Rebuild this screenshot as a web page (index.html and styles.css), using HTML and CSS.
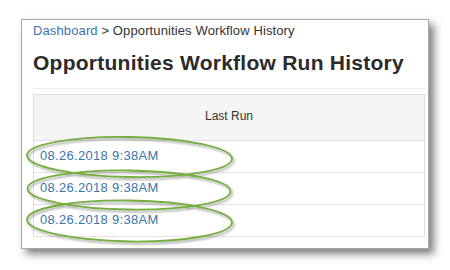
FILE: index.html
```html
<!DOCTYPE html>
<html>
<head>
<meta charset="utf-8">
<link rel="stylesheet" href="styles.css">
</head>
<body>
<div class="card">
  <div class="crumbs"><a class="link" href="#">Dashboard</a> &gt; Opportunities Workflow History</div>
  <h1 class="title">Opportunities Workflow Run History</h1>
  <table class="runs">
    <thead>
      <tr><th>Last Run</th></tr>
    </thead>
    <tbody>
      <tr><td><a class="link" href="#">08.26.2018 9:38AM</a></td></tr>
      <tr><td><a class="link" href="#">08.26.2018 9:38AM</a></td></tr>
      <tr><td><a class="link" href="#">08.26.2018 9:38AM</a></td></tr>
    </tbody>
  </table>
</div>
<svg class="marks" width="450" height="270" viewBox="0 0 450 270">
  <defs>
    <filter id="sh" x="-10%" y="-30%" width="120%" height="160%">
      <feDropShadow dx="1.5" dy="2" stdDeviation="1.2" flood-color="#000" flood-opacity="0.35"/>
    </filter>
  </defs>
  <g fill="none" stroke="#74ad3f" stroke-width="1.8" filter="url(#sh)">
    <ellipse cx="129.5" cy="157" rx="102.5" ry="20" transform="rotate(1 129.5 157)"/>
    <ellipse cx="129" cy="190" rx="101.5" ry="19.5" transform="rotate(0.8 129 190)"/>
    <ellipse cx="129.5" cy="221" rx="102.5" ry="20.5" transform="rotate(0.8 129.5 221)"/>
  </g>
</svg>
</body>
</html>
```
FILE: styles.css
```css
html, body {
  margin: 0;
  padding: 0;
  background: #fff;
}
body {
  width: 450px;
  height: 270px;
  overflow: hidden;
  position: relative;
  font-family: "Liberation Sans", Arial, sans-serif;
  color: #333;
}
.card {
  margin: 19px 0 0 21px;
  width: 393px;
  height: 216px;
  border: 1px solid #a9a9a9;
  padding: 2px 2px 10px 11px;
  background: #fff;
  box-shadow: 5px 5px 8px rgba(0, 0, 0, 0.5);
}
.link {
  color: #3a76ad;
  text-decoration: none;
}
.crumbs {
  font-size: 13px;
  line-height: 18px;
  letter-spacing: 0.12px;
  color: #333;
}
.title {
  margin: 10.5px 0 0 0;
  font-size: 21px;
  line-height: 24px;
  letter-spacing: 0.25px;
  font-weight: bold;
  color: #2b2b2b;
  padding-bottom: 13px;
  border-bottom: 1px solid #f0f0f0;
}
.runs {
  margin-top: 5px;
  width: 392px;
  border-collapse: collapse;
  border: 1px solid #dddddd;
}
.runs th {
  background: #f5f5f5;
  font-size: 12px;
  font-weight: normal;
  line-height: 16px;
  height: 46px;
  padding: 0 0 2px 0;
  box-sizing: border-box;
  text-align: center;
  color: #333;
  border-bottom: 1px solid #e2e2e2;
}
.runs td {
  font-size: 13px;
  line-height: 18px;
  letter-spacing: 0.3px;
  padding: 6px 6px 7px 6px;
  border-bottom: 1px solid #e2e2e2;
  text-align: left;
}
.marks {
  position: absolute;
  left: 0;
  top: 0;
  pointer-events: none;
}
```
